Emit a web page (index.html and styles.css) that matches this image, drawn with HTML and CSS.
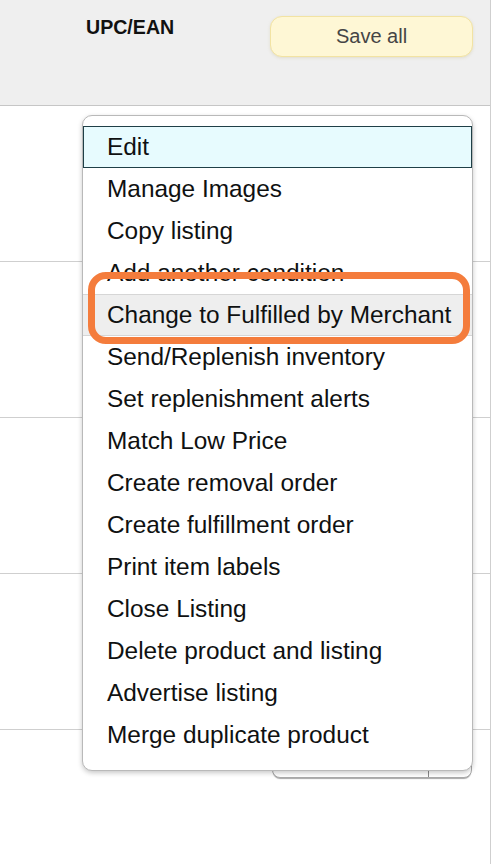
FILE: index.html
```html
<!DOCTYPE html>
<html lang="en">
<head>
<meta charset="utf-8">
<title>Inventory actions</title>
<link rel="stylesheet" href="styles.css">
</head>
<body>
<div class="page">
  <div class="table">
    <div class="thead">
      <div class="th-upc">UPC/EAN</div>
      <button class="save">Save all</button>
    </div>
    <div class="row"><div class="split"><span class="split-main">Edit</span><span class="split-caret"></span></div></div>
    <div class="row"><div class="split"><span class="split-main">Edit</span><span class="split-caret"></span></div></div>
    <div class="row"><div class="split"><span class="split-main">Edit</span><span class="split-caret"></span></div></div>
    <div class="row"><div class="split"><span class="split-main">Edit</span><span class="split-caret"></span></div></div>
    <div class="row"><div class="split"><span class="split-main">Edit</span><span class="split-caret"></span></div></div>
  </div>

  <ul class="menu">
    <li class="item item-active">Edit</li>
    <li class="item">Manage Images</li>
    <li class="item">Copy listing</li>
    <li class="item">Add another condition</li>
    <li class="item item-hover">Change to Fulfilled by Merchant</li>
    <li class="item">Send/Replenish inventory</li>
    <li class="item">Set replenishment alerts</li>
    <li class="item">Match Low Price</li>
    <li class="item">Create removal order</li>
    <li class="item">Create fulfillment order</li>
    <li class="item">Print item labels</li>
    <li class="item">Close Listing</li>
    <li class="item">Delete product and listing</li>
    <li class="item">Advertise listing</li>
    <li class="item">Merge duplicate product</li>
  </ul>

  <div class="callout"></div>
</div>
</body>
</html>
```

FILE: styles.css
```css
html, body {
  margin: 0;
  padding: 0;
  background: #ffffff;
}

body {
  font-family: "Liberation Sans", Arial, sans-serif;
  color: #0f1111;
}

.page {
  position: relative;
  width: 500px;
  height: 864px;
  overflow: hidden;
}

.table {
  width: 491px;
  height: 864px;
  box-sizing: border-box;
  border-right: 1px solid #cfcfcf;
}

.thead {
  height: 106px;
  box-sizing: border-box;
  background: #efefef;
  border-bottom: 1px solid #c6c6c6;
  display: flex;
  align-items: flex-start;
  padding: 16px 0 0 86px;
}

.th-upc {
  width: 184px;
  margin-top: 0;
  font-size: 19.6px;
  line-height: 22px;
  font-weight: bold;
  color: #111111;
}

.save {
  width: 203px;
  height: 41px;
  box-sizing: border-box;
  background: #fef7d5;
  border: 1px solid #f2e3a3;
  border-radius: 12px;
  box-shadow: 0 1px 3px rgba(200, 190, 140, 0.35);
  font-family: "Liberation Sans", Arial, sans-serif;
  font-size: 20px;
  color: #454545;
  padding: 0;
}

.row {
  height: 156px;
  box-sizing: border-box;
  border-bottom: 1px solid #cfcfcf;
  display: flex;
  justify-content: flex-end;
  align-items: flex-start;
  padding: 12px 18px 0 0;
}

.split {
  width: 200px;
  height: 36px;
  box-sizing: border-box;
  display: flex;
  border: 1px solid #a9a9a9;
  border-radius: 8px;
  background: #ffffff;
  box-shadow: 0 2px 1px -1px rgba(0, 0, 0, 0.35);
  font-size: 18px;
}

.split-main {
  flex: 1;
  border-right: 1px solid #8a8a8a;
  line-height: 34px;
  text-align: center;
}

.split-caret {
  width: 42px;
}

.menu {
  position: absolute;
  top: 115px;
  left: 82px;
  width: 391px;
  margin: 0;
  padding: 10px 0 14px;
  list-style: none;
  box-sizing: border-box;
  background: #ffffff;
  border: 1px solid #b9b9b9;
  border-radius: 10px;
  box-shadow: 0 2px 5px rgba(0, 0, 0, 0.22);
}

.item {
  height: 42px;
  box-sizing: border-box;
  padding-left: 24px;
  font-size: 24.4px;
  line-height: 42px;
  color: #0f1111;
  white-space: nowrap;
}

.item-active {
  background: #e7fbfe;
  border: 1.5px solid #1f3f47;
  padding-left: 23px;
  line-height: 39px;
}

.item-hover {
  background: #eeeeee;
  border-top: 1px solid #d6d6d6;
  border-bottom: 1px solid #d6d6d6;
  line-height: 40px;
}

.callout {
  position: absolute;
  left: 88px;
  top: 272px;
  width: 382px;
  height: 72px;
  box-sizing: border-box;
  border: 7px solid #f47c3c;
  border-radius: 18px;
}
```
